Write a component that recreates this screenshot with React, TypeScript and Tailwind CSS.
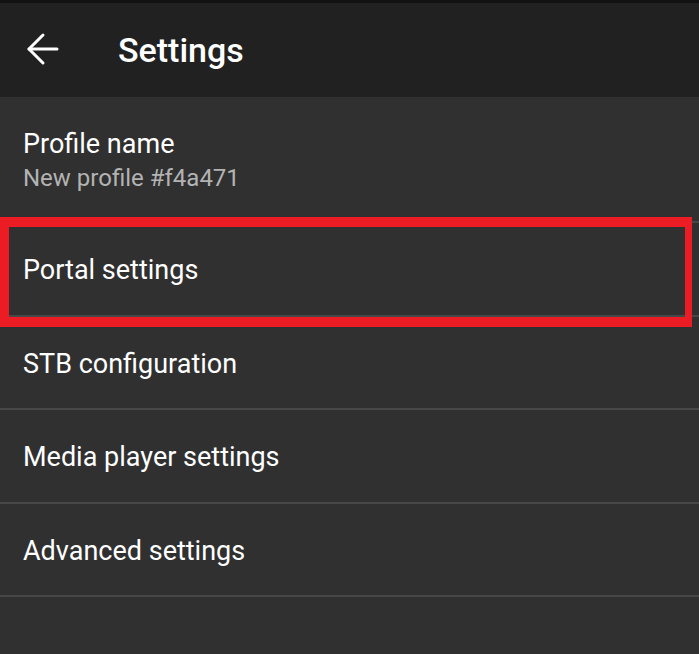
import { ArrowLeft } from "lucide-react"

const items = ["Portal settings", "STB configuration", "Media player settings", "Advanced settings"]

export default function App() {
    return <div className="w-[699px] h-[654px] bg-[#303030] overflow-hidden" style={{ fontFamily: "Roboto, 'Noto Sans', sans-serif" }}>
        <div className="h-[3px] bg-[#121212]" />
        <div className="h-[94px] bg-[#212121] flex items-center">
            <ArrowLeft className="ml-[19px] mb-[2px] text-white" size={48} strokeWidth={1.5} />
            <h1 className="ml-[51px] text-[34px] font-medium text-white">Settings</h1>
        </div>

        <div className="h-[126px] px-[23px] pt-[30px] border-b-2 border-[#474747]">
            <p className="text-[27px] text-white leading-[34px]">Profile name</p>
            <p className="text-[24px] text-[#b3b3b3] leading-[34px]">New profile #f4a471</p>
        </div>

        {items.map((item, i) =>
            <div key={item} className="relative h-[93.5px] px-[23px] pt-[3px] flex items-center border-b-2 border-[#474747]">
                <span className="text-[27px] text-white">{item}</span>
                {i === 0 && <div className="absolute left-0 top-[-6px] w-[692px] h-[110px] border-[#ec1c24] border-t-[10px] border-b-[10px] border-l-[9px] border-r-[7px]" />}
            </div>
        )}
    </div>
}
